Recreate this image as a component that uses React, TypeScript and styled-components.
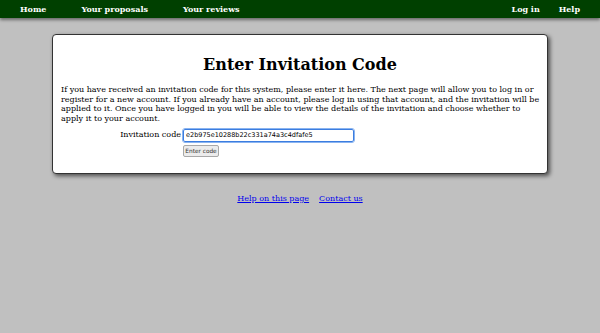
import React from "react";
import styled, { createGlobalStyle } from "styled-components";

const Global = createGlobalStyle`
  html, body { margin: 0; padding: 0; background: #c0c0c0; }
  body { font-family: "DejaVu Serif", serif; color: #000; }
`;

const NavBar = styled.nav`
  height: 18px;
  background: #004000;
  display: flex;
  align-items: center;
  justify-content: space-between;
  padding: 0 20px;
  box-shadow: 0 2px 3px rgba(0,0,0,0.45);
`;

const NavGroup = styled.div<{ $gap: number }>`
  display: flex;
  gap: ${(p) => p.$gap}px;
`;

const NavItem = styled.a`
  color: #fff;
  font-weight: bold;
  font-size: 8px;
  text-decoration: none;
`;

const Card = styled.main`
  margin: 16px 52px 0;
  background: #fff;
  border: 1px solid #333;
  border-radius: 4px;
  box-shadow: 2px 2px 4px rgba(0,0,0,0.6);
  padding: 20px 8px 16px;
`;

const Title = styled.h1`
  margin: 0 0 10px;
  text-align: center;
  font-size: 16px;
  line-height: 20px;
  font-weight: bold;
`;

const Para = styled.p`
  margin: 0 -3px 5px 0;
  font-size: 8px;
  line-height: 9.7px;
`;

const FormGrid = styled.div`
  display: grid;
  grid-template-columns: 120px auto;
  column-gap: 2px;
  row-gap: 3px;
  align-items: start;
`;

const Label = styled.label`
  font-size: 8px;
  text-align: right;
  padding-top: 1px;
`;

const Input = styled.input`
  width: 171px;
  height: 13px;
  margin: 0;
  box-sizing: border-box;
  border: 1px solid #3b7de0;
  outline: 1px solid #8ab4f0;
  border-radius: 2px;
  font-family: "DejaVu Sans", sans-serif;
  font-size: 6.5px;
  padding: 0 2px;
`;

const Button = styled.button`
  grid-column: 2;
  justify-self: start;
  height: 12px;
  width: 36px;
  margin: 0;
  padding: 0;
  font-family: "DejaVu Sans", sans-serif;
  font-size: 5.8px;
  color: #333;
  background: #ececec;
  border: 1px solid #a8a8a8;
  border-radius: 2px;
`;

const Footer = styled.footer`
  display: flex;
  justify-content: center;
  gap: 10px;
  margin-top: 20px;
`;

const FootLink = styled.a`
  color: #0000ee;
  font-size: 8px;
`;

export default function App() {
  return (
    <>
      <Global />
      <NavBar>
        <NavGroup $gap={35}>
          <NavItem href="#">Home</NavItem>
          <NavItem href="#">Your proposals</NavItem>
          <NavItem href="#">Your reviews</NavItem>
        </NavGroup>
        <NavGroup $gap={19}>
          <NavItem href="#">Log in</NavItem>
          <NavItem href="#">Help</NavItem>
        </NavGroup>
      </NavBar>
      <Card>
        <Title>Enter Invitation Code</Title>
        <Para>
          If you have received an invitation code for this system, please enter it here. The next page will allow you to log in or register for a new account. If you already have an account, please log in using that account, and the invitation will be applied to it. Once you have logged in you will be able to view the details of the invitation and choose whether to apply it to your account.
        </Para>
        <FormGrid>
          <Label htmlFor="code">Invitation code</Label>
          <Input id="code" defaultValue="e2b975e10288b22c331a74a3c4dfafe5" />
          <Button>Enter code</Button>
        </FormGrid>
      </Card>
      <Footer>
        <FootLink href="#">Help on this page</FootLink>
        <FootLink href="#">Contact us</FootLink>
      </Footer>
    </>
  );
}
